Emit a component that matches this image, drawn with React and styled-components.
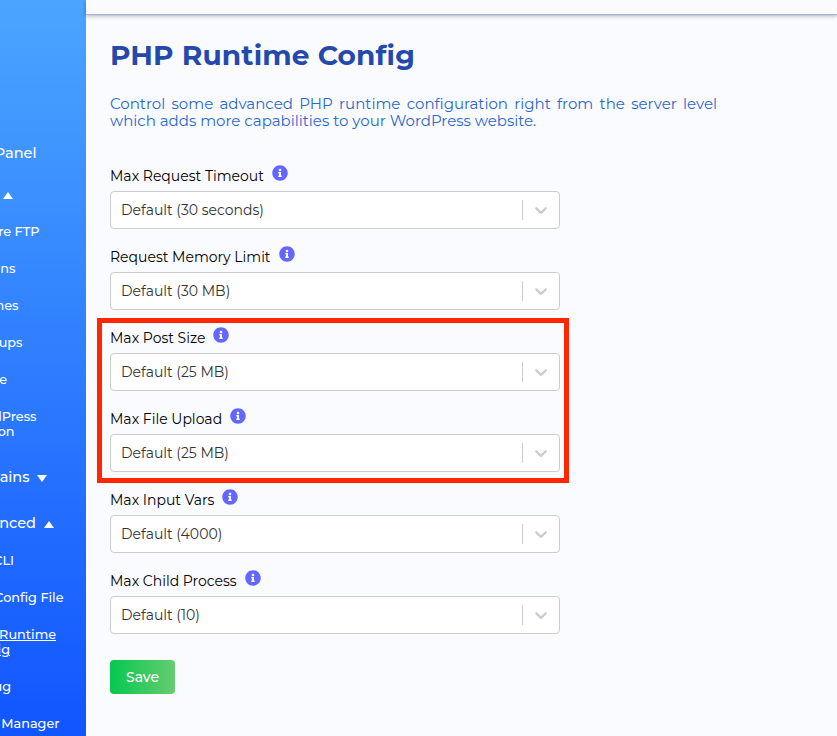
import React from "react";
import styled, { createGlobalStyle } from "styled-components";

const menu = [
  { text: "Panel", right: 36.5, height: 42, big: true },
  { text: "", right: 0, height: 39, arrow: "up", gap: 3, drop: 3 },
  { text: "re FTP", right: 39.5 },
  { text: "ns", right: 15.5 },
  { text: "nes", right: 18.5 },
  { text: "ups", right: 22.5 },
  { text: "e", right: 7 },
  { text: "dPress", right: 36.5, second: "on", secondRight: 14.5 },
  { text: "ains", right: 29.5, height: 54, big: true, arrow: "down", gap: 7.5 },
  { text: "nced", right: 36, height: 38, big: true, arrow: "up", gap: 8 },
  { text: "CLI", right: 14 },
  { text: "Config File", right: 63.5 },
  { text: "P Runtime", right: 56, second: "ig", secondRight: 10, active: true },
  { text: "ug", right: 11 },
  { text: "Manager", right: 59.5 },
];

const fields = [
  { label: "Max Request Timeout", value: "Default (30 seconds)" },
  { label: "Request Memory Limit", value: "Default (30 MB)" },
];

const uploadFields = [
  { label: "Max Post Size", value: "Default (25 MB)" },
  { label: "Max File Upload", value: "Default (25 MB)" },
];

const otherFields = [
  { label: "Max Input Vars", value: "Default (4000)" },
  { label: "Max Child Process", value: "Default (10)" },
];

const InfoIcon = () => (
  <svg width="16" height="16" viewBox="0 0 512 512">
    <path
      fill="#6366ff"
      d="M256 8C119 8 8 119 8 256s111 248 248 248 248-111 248-248S393 8 256 8zm0 110c23 0 42 19 42 42s-19 42-42 42-42-19-42-42 19-42 42-42zm56 254c0 7-5 12-12 12h-88c-7 0-12-5-12-12v-24c0-7 5-12 12-12h12v-64h-12c-7 0-12-5-12-12v-24c0-7 5-12 12-12h64c7 0 12 5 12 12v100h12c7 0 12 5 12 12v24z"
    />
  </svg>
);

const Chevron = () => (
  <svg width="20" height="20" viewBox="0 0 20 20" fill="#ccc">
    <path d="M4.516 7.548c0.436-0.446 1.043-0.481 1.576 0l3.908 3.747 3.908-3.747c0.533-0.481 1.141-0.446 1.574 0 0.436 0.445 0.408 1.197 0 1.615-0.406 0.418-4.695 4.502-4.695 4.502-0.217 0.223-0.502 0.335-0.787 0.335s-0.57-0.112-0.789-0.335c0 0-4.287-4.084-4.695-4.502s-0.436-1.17 0-1.615z" />
  </svg>
);

const Field = ({ label, value }) => (
  <FieldBox>
    <Label>
      <span>{label}</span>
      <InfoIcon />
    </Label>
    <Select>
      <Value>{value}</Value>
      <Separator />
      <Indicator>
        <Chevron />
      </Indicator>
    </Select>
  </FieldBox>
);

const App = () => {
  return (
    <>
      <GlobalStyle />
      <Page>
        <Sidebar>
          {menu.map((item, i) => (
            <MenuItem key={i} $height={item.height} $two={item.second}>
              <MenuLine>
                <MenuText
                  $right={item.right}
                  $big={item.big}
                  $active={item.active}
                >
                  {item.text}
                </MenuText>
                {item.arrow && (
                  <Arrow $dir={item.arrow} $gap={item.gap} $drop={item.drop} />
                )}
              </MenuLine>
              {item.second && (
                <MenuText $right={item.secondRight} $active={item.active}>
                  {item.second}
                </MenuText>
              )}
            </MenuItem>
          ))}
        </Sidebar>
        <Main>
          <TopBar />
          <Content>
            <Title>PHP Runtime Config</Title>
            <Description>
              Control some advanced PHP runtime configuration right from the
              server level which adds more capabilities to your WordPress
              website.
            </Description>
            {fields.map((f) => (
              <Field key={f.label} {...f} />
            ))}
            <Highlighted>
              {uploadFields.map((f) => (
                <Field key={f.label} {...f} />
              ))}
            </Highlighted>
            {otherFields.map((f) => (
              <Field key={f.label} {...f} />
            ))}
            <SaveButton>Save</SaveButton>
          </Content>
        </Main>
      </Page>
    </>
  );
};

const GlobalStyle = createGlobalStyle`
  *,
  *::after {
    box-sizing: border-box;
  }
  body {
    margin: 0;
    overflow: hidden;
    background: #fafbff;
    font-family: Montserrat, Inter, sans-serif;
  }
`;

const Page = styled.div`
  display: flex;
  height: 736px;
  overflow: hidden;
`;

const Sidebar = styled.nav`
  width: 86px;
  flex-shrink: 0;
  padding-top: 132px;
  overflow: hidden;
  color: #fff;
  background: linear-gradient(180deg, #4ba5ff 0%, #1155ff 100%);
`;

const MenuItem = styled.div`
  display: flex;
  flex-direction: column;
  justify-content: center;
  height: ${(p) => p.$height || (p.$two ? 52 : 37)}px;
`;

const MenuLine = styled.div`
  display: flex;
  align-items: center;
`;

const MenuText = styled.span`
  display: flex;
  justify-content: flex-end;
  flex-shrink: 0;
  width: ${(p) => p.$right}px;
  white-space: nowrap;
  font-size: ${(p) => (p.$big ? "14.5px" : "12.8px")};
  line-height: ${(p) => (p.$big ? "20px" : "15.5px")};
  font-weight: 500;
  text-decoration: ${(p) => (p.$active ? "underline" : "none")};
`;

const Arrow = styled.i`
  margin-left: ${(p) => p.$gap}px;
  margin-top: ${(p) => p.$drop || 2}px;
  border-left: 5px solid transparent;
  border-right: 5px solid transparent;
  ${(p) => (p.$dir === "up" ? "border-bottom" : "border-top")}: 7px solid #fff;
`;

const Main = styled.main`
  flex: 1;
`;

const TopBar = styled.header`
  height: 15px;
  border-bottom: 1px solid #a3b0dc;
  box-shadow: 0 1px 4px rgba(0, 0, 0, 0.3);
`;

const Content = styled.section`
  padding: 22px 24px 0;
`;

const Title = styled.h1`
  margin: 0;
  color: #2449ad;
  font-size: 28px;
  line-height: 36px;
  font-weight: 700;
  letter-spacing: 0.13px;
`;

const Description = styled.p`
  width: 607px;
  margin: 22px 0 36px;
  color: #2a67cc;
  font-size: 15px;
  line-height: 17px;
  text-align: justify;
`;

const FieldBox = styled.div`
  width: 450px;
  height: 81px;
`;

const Label = styled.label`
  display: flex;
  height: 26px;
  color: #000;
  font-size: 14px;
  line-height: 22px;

  svg {
    margin-left: 8px;
  }
`;

const Select = styled.div`
  display: flex;
  align-items: center;
  height: 38px;
  border: 1px solid #ccc;
  border-radius: 4px;
  background: #fff;
`;

const Value = styled.div`
  flex: 1;
  padding-left: 10px;
  color: #333;
  font-size: 14px;
`;

const Separator = styled.span`
  width: 1px;
  height: 20px;
  background: #ccc;
`;

const Indicator = styled.div`
  display: flex;
  padding: 8px;
`;

const Highlighted = styled.div`
  position: relative;
  width: 450px;

  &::after {
    content: "";
    position: absolute;
    top: -9px;
    left: -13px;
    width: 472px;
    height: 165px;
    border: 5px solid #ff2600;
  }
`;

const SaveButton = styled.button`
  display: block;
  width: 65px;
  height: 34px;
  margin-top: 9px;
  padding: 0;
  border: 0;
  border-radius: 4px;
  color: #fff;
  background: linear-gradient(90deg, #05c850, #66cc70);
  font-family: inherit;
  font-size: 14px;
  font-weight: 500;
`;

export default App;
